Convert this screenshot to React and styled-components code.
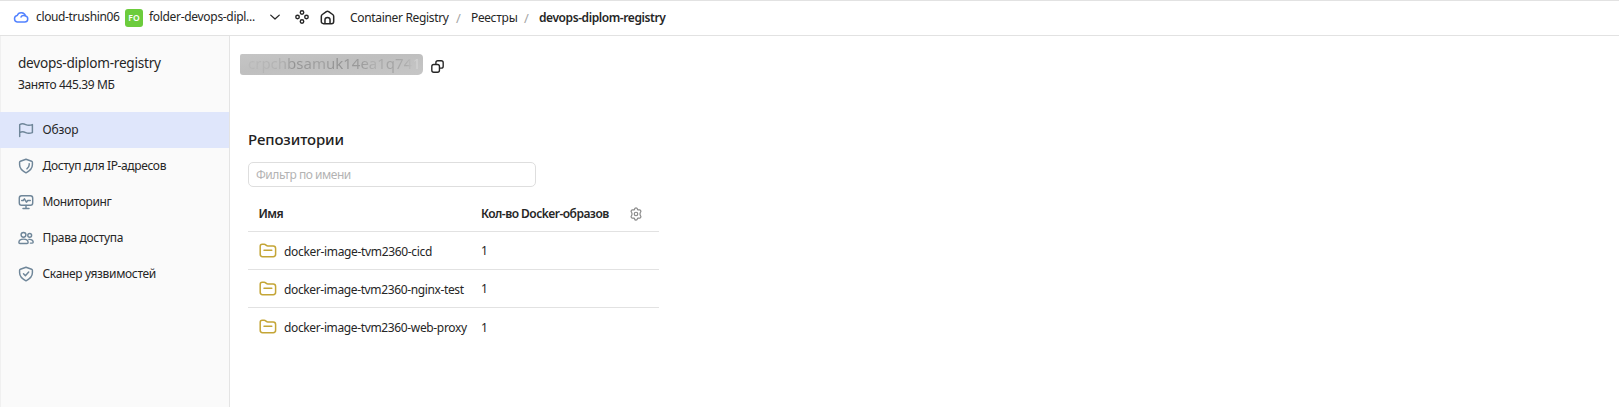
import React from "react";
import styled, { createGlobalStyle } from "styled-components";

const GlobalStyle = createGlobalStyle`
  *, *::before, *::after { box-sizing: border-box; }
  body {
    margin: 0;
    background: #fff;
    color: #262626;
    font-family: "Noto Sans", "Open Sans", sans-serif;
    font-size: 12px;
    line-height: 16px;
  }
`;

const Page = styled.div`
  height: 407px;
  display: flex;
  flex-direction: column;
  overflow: hidden;
  border-top: 1px solid #e2e2e2;
`;

const Header = styled.header`
  height: 35px;
  flex: none;
  display: flex;
  align-items: center;
  padding: 0 0 2px 13px;
  border-bottom: 1px solid #e2e2e2;
`;

const Text = styled.span`
  white-space: nowrap;
  letter-spacing: ${(p) => p.$track ?? -0.3}px;
`;

const CloudName = styled(Text)`
  width: 85px;
  margin-left: 7px;
`;

const FolderBadge = styled.span`
  width: 18px;
  height: 18px;
  margin: 2px 6px 0 4px;
  border-radius: 3px;
  background: #6ccc3c;
  color: #fff;
  font-size: 8.5px;
  font-weight: 600;
  line-height: 18px;
  text-align: center;
`;

const FolderName = styled(Text)`
  width: 120px;
`;

const HeaderIcon = styled.span`
  display: flex;
  margin-left: ${(p) => p.$gap ?? 0}px;
`;

const Crumbs = styled.nav`
  display: flex;
  align-items: center;
  margin: 2px 0 0 15px;
`;

const Crumb = styled(Text)`
  width: ${(p) => p.$w}px;
  font-weight: ${(p) => (p.$current ? 600 : 400)};
`;

const Slash = styled.span`
  width: 23px;
  padding-left: 8px;
  font-size: 13px;
  color: #a6a6a6;
`;

const Body = styled.div`
  flex: 1;
  display: flex;
`;

const Sidebar = styled.aside`
  width: 230px;
  flex: none;
  background: #fafafa;
  border-left: 1px solid #f0f0f0;
  border-right: 1px solid #e4e4e4;
`;

const RegistryInfo = styled.div`
  height: 76px;
  padding: 18px 0 0 17px;
`;

const RegistryTitle = styled.div`
  height: 23px;
  font-size: 13.6px;
  line-height: 18px;
  letter-spacing: -0.24px;
`;

const NavItem = styled.div`
  height: 36px;
  display: flex;
  align-items: center;
  gap: 9px;
  margin-left: -1px;
  padding-left: 17.5px;
  background: ${(p) => (p.$active ? "#dfe6fb" : "transparent")};
  svg { color: #6f8699; }
`;

const Main = styled.main`
  flex: 1;
`;

const IdLine = styled.div`
  display: flex;
  align-items: center;
  gap: 8px;
  padding: 17px 0 0 10px;
  height: 39px;
`;

const MaskedId = styled.div`
  width: 183px;
  height: 21px;
  padding-left: 8px;
  border-radius: 2px 4px 5px 3px;
  background: linear-gradient(174deg, #c5c5c5, #bfbfbf 45%, #c6c6c6);
  font-size: 15px;
  line-height: 19px;
`;

const MaskedText = styled.span`
  background: linear-gradient(90deg, #bababa 0, #b0b0b0 20%, #929292 27%, #a2a2a2 42%, #929292 52%, #9c9c9c 66%, #b0b0b0 73%, #a2a2a2 82%, #adadad 92%, #d6d6d6 98%);
  background-clip: text;
  color: transparent;
`;

const CopyButton = styled.span`
  display: flex;
  padding-top: 4px;
`;

const Content = styled.section`
  padding: 54px 0 0 18px;
`;

const Heading = styled.h2`
  margin: 0;
  height: 33px;
  font-size: 15px;
  line-height: 20px;
  font-weight: 500;
  letter-spacing: -0.1px;
  color: #222;
`;

const Filter = styled.div`
  width: 288px;
  height: 25px;
  padding-left: 7px;
  border: 1px solid #dedede;
  border-radius: 5px;
  color: #b3b3b3;
  line-height: 24px;
`;

const Table = styled.div`
  width: 411px;
  margin-top: 7px;
`;

const TableRow = styled.div`
  display: grid;
  grid-template-columns: 223px 148px 1fr;
  align-items: center;
  height: 38px;
  padding-left: 10px;
  border-bottom: ${(p) => (p.$last ? "0" : "1px solid #e2e2e2")};
  font-weight: ${(p) => (p.$head ? 600 : 400)};
`;

const NameCell = styled.div`
  display: flex;
  align-items: center;
  gap: 7px;
  padding: 2px 0 0 1px;
  svg { margin-bottom: 1.5px; }
`;

const CountCell = styled.div`
  padding-top: 1px;
`;

const HeadCell = styled(Text)`
  padding: 2px 0 0 ${(p) => p.$inset ?? 0}px;
`;

const GearCell = styled.span`
  display: flex;
  padding-top: 3px;
  color: #8a8a8a;
`;

function Icon({ size = 16, stroke = 1.4, color = "currentColor", children }) {
  return (
    <svg width={size} height={size} viewBox="0 0 16 16" fill="none" stroke={color}
      strokeWidth={stroke} strokeLinecap="round" strokeLinejoin="round">
      {children}
    </svg>
  );
}

const shield = "M8 1.3 13.6 3.2c.5.2.8.6.8 1.1v2.5c0 3.6-2.4 6-6.400 8-4-2-6.400-4.400-6.400-8V4.300c0-.5.3-.9.8-1.100Z";

const navItems = [
  { label: "Обзор", track: -0.12, active: true,
    icon: <path d="M1.700 14.600V2.600c2-1.100 3.800-1 6 0s4.100 1 6.700 0v8c-2.600 1-4.600 1-6.700 0s-4-1.100-6 0" /> },
  { label: "Доступ для IP-адресов", track: -0.37,
    icon: <><path d={shield} /><path d="M11.200 5.600v1.200c0 1.600-.8 2.900-2.300 4" /></> },
  { label: "Мониторинг", track: -0.4,
    icon: <><rect x="1.300" y="1.700" width="13.400" height="9.600" rx="2.300" /><path d="M3.700 6.500h1.500l1.200-1.700 2 3.400 1.300-1.700h2.600M8 11.500v2.800M5 14.500h6" /></> },
  { label: "Права доступа", track: -0.37,
    icon: <><circle cx="5.500" cy="4.800" r="2.400" /><circle cx="11.700" cy="5.300" r="1.900" /><path d="M.9 12.400c0-2 1.600-3.300 4.600-3.300s4.600 1.300 4.600 3.300c0 .7-.4 1-1 1H1.900c-.6 0-1-.3-1-1ZM10.900 9.400c2.800-.2 4.300 1 4.300 2.700 0 .7-.3 1-.9 1h-1.900" /></> },
  { label: "Сканер уязвимостей", track: -0.33,
    icon: <><path d={shield} /><path d="m5.500 7.800 1.900 1.900 3.300-3.700" /></> },
];

const repositories = [
  { name: "docker-image-tvm2360-cicd", count: 1, track: -0.34 },
  { name: "docker-image-tvm2360-nginx-test", count: 1, track: -0.37 },
  { name: "docker-image-tvm2360-web-proxy", count: 1, track: -0.36 },
];

const FolderIcon = () => (
  <svg width="18" height="16" viewBox="0 0 18 16" fill="none" stroke="#c4a536" strokeWidth="1.5" strokeLinecap="round" strokeLinejoin="round">
    <path d="M1.200 3.300c0-1.300.8-2 2-2h2c1.600 0 2 1.700 3.600 1.700h5.400c1.500 0 2.400.9 2.400 2.400v5.900c0 1.500-.9 2.400-2.400 2.400H3.600c-1.500 0-2.400-.9-2.400-2.400ZM5 7.200h7.800" />
  </svg>
);

export default function App() {
  return (
    <>
      <GlobalStyle />
      <Page>
        <Header>
          <Icon size={16} stroke={1.5} color="#5282ff">
            <path d="M4.200 13h7.600a3 3 0 0 0 .7-5.900A4.300 4.300 0 0 0 4.200 6.600 3.250 3.250 0 0 0 4.200 13ZM8 8.100c.5-1.300 2-2 4-1.300" />
          </Icon>
          <CloudName $track={-0.36}>cloud-trushin06</CloudName>
          <FolderBadge>FO</FolderBadge>
          <FolderName $track={-0.31}>folder-devops-dipl...</FolderName>
          <HeaderIcon>
            <Icon size={12} stroke={1.7}><path d="m2.300 5.500 5.700 5.200 5.700-5.200" /></Icon>
          </HeaderIcon>
          <HeaderIcon $gap={14}>
            <Icon size={14} stroke={1.6}>
              <circle cx="8" cy="2.900" r="2" /><circle cx="8" cy="13.100" r="2" />
              <circle cx="2.900" cy="8" r="2" /><circle cx="13.100" cy="8" r="2" />
            </Icon>
          </HeaderIcon>
          <HeaderIcon $gap={11}>
            <Icon size={15} stroke={1.6}>
              <path d="M1.400 6.800c0-.9.400-1.500 1.100-2L6.800 1.700c.8-.6 1.600-.6 2.400 0l4.300 3.100c.7.500 1.100 1.100 1.100 2v5.400c0 1.500-.9 2.400-2.400 2.400H3.800c-1.500 0-2.400-.9-2.400-2.400ZM5.300 14.300v-4c0-1.400 1.100-2.400 2.700-2.400s2.700 1 2.700 2.400v4" />
            </Icon>
          </HeaderIcon>
          <Crumbs>
            <Crumb $w={98} $track={-0.33}>Container Registry</Crumb>
            <Slash>/</Slash>
            <Crumb $w={45} $track={-0.25}>Реестры</Crumb>
            <Slash>/</Slash>
            <Crumb $w={128} $track={-0.42} $current>devops-diplom-registry</Crumb>
          </Crumbs>
        </Header>
        <Body>
          <Sidebar>
            <RegistryInfo>
              <RegistryTitle>devops-diplom-registry</RegistryTitle>
              <Text $track={-0.38}>Занято 445.39 МБ</Text>
            </RegistryInfo>
            {navItems.map((item) => (
              <NavItem key={item.label} $active={item.active}>
                <Icon size={16} stroke={1.45}>{item.icon}</Icon>
                <Text $track={item.track}>{item.label}</Text>
              </NavItem>
            ))}
          </Sidebar>
          <Main>
            <IdLine>
              <MaskedId><MaskedText>crpchbsamuk14ea1q741</MaskedText></MaskedId>
              <CopyButton>
                <Icon size={13} stroke={1.7}>
                  <rect x="1" y="5.600" width="9.400" height="9.400" rx="2.400" />
                  <path d="M6 5.400V3.400C6 1.900 6.900 1 8.400 1h4.200C14.100 1 15 1.900 15 3.400v4.200c0 1.500-.9 2.400-2.400 2.400h-2" />
                </Icon>
              </CopyButton>
            </IdLine>
            <Content>
              <Heading>Репозитории</Heading>
              <Filter><Text $track={-0.46}>Фильтр по имени</Text></Filter>
              <Table>
                <TableRow $head>
                  <HeadCell $track={-0.5} $inset={0.5}>Имя</HeadCell>
                  <HeadCell $track={-0.52}>Кол-во Docker-образов</HeadCell>
                  <GearCell>
                    <Icon size={14} stroke={1.4}>
                      <path d="M6.400 2.300c.4-1.700 2.800-1.700 3.200 0 .2.900.9 1.300 1.800 1 1.700-.5 2.900 1.500 1.700 2.800-.7.700-.7 3.100 0 3.800 1.200 1.300 0 3.300-1.700 2.800-.9-.3-1.600.1-1.800 1-.4 1.700-2.800 1.700-3.200 0-.2-.9-.9-1.300-1.800-1-1.700.5-2.900-1.500-1.700-2.800.7-.7.700-3.100 0-3.800-1.200-1.300 0-3.300 1.700-2.800.9.300 1.600-.1 1.800-1Z" />
                      <circle cx="8" cy="8" r="2" />
                    </Icon>
                  </GearCell>
                </TableRow>
                {repositories.map((repo, i) => (
                  <TableRow key={repo.name} $last={i === repositories.length - 1}>
                    <NameCell>
                      <FolderIcon />
                      <Text $track={repo.track}>{repo.name}</Text>
                    </NameCell>
                    <CountCell>{repo.count}</CountCell>
                  </TableRow>
                ))}
              </Table>
            </Content>
          </Main>
        </Body>
      </Page>
    </>
  );
}
